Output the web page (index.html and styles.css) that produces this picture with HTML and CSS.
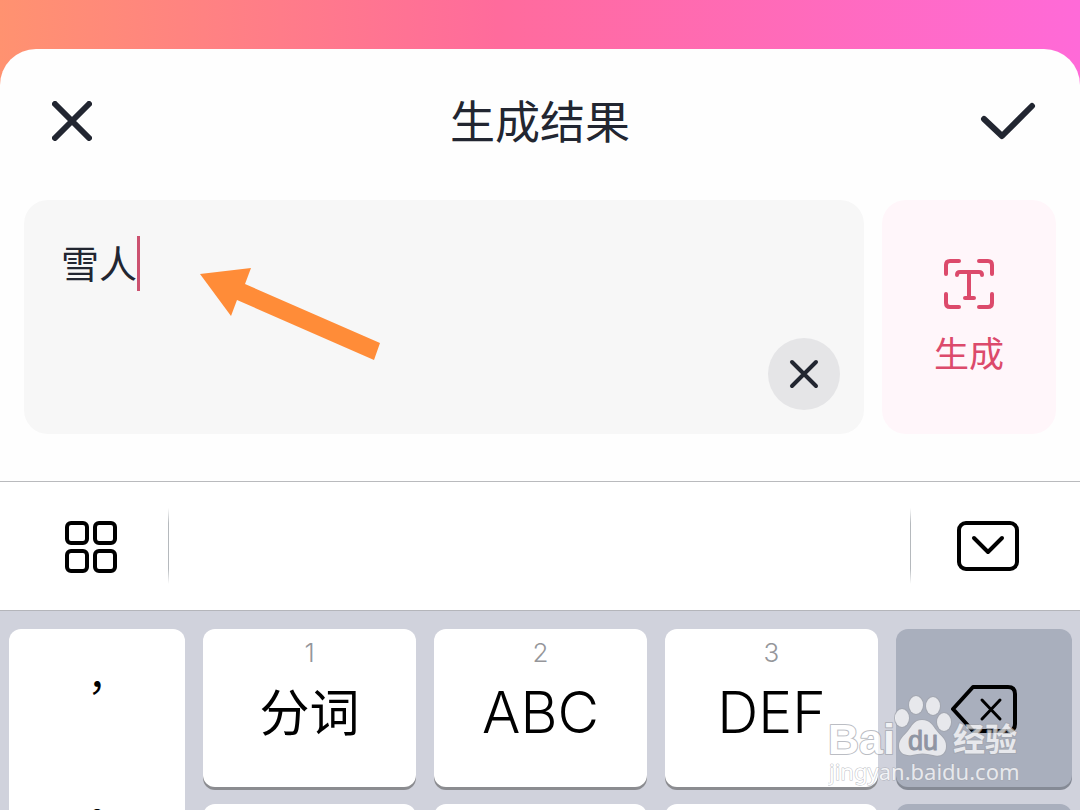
FILE: index.html
```
<!DOCTYPE html>
<html lang="zh-CN">
<head>
    <meta charset="UTF-8">
    <meta name="viewport" content="width=device-width, initial-scale=1.0">
    <title>生成结果</title>
    <link rel="stylesheet" href="styles.css">
</head>
<body>
    <main class="sheet">
        <header class="sheet-header">
            <button class="icon-btn" type="button" aria-label="关闭">
                <svg width="40" height="40" viewBox="0 0 40 40"><path d="M3 3 37 37M37 3 3 37" stroke-width="6"/></svg>
            </button>
            <h1>生成结果</h1>
            <button class="icon-btn" type="button" aria-label="完成">
                <svg width="56" height="38" viewBox="0 0 56 38"><path d="M4 17 22 34 52 4" stroke-width="6"/></svg>
            </button>
        </header>

        <div class="compose">
            <div class="input-box">
                <textarea class="prompt" aria-label="输入文字">雪人</textarea>
                <span class="caret"></span>
                <svg class="arrow" width="182" height="94" viewBox="0 0 182 94"><path d="M0 7 51 1 45 17 180 76 174 93 37 33 31 49Z"/></svg>
                <button class="clear-btn" type="button" aria-label="清空">
                    <svg width="30" height="30" viewBox="0 0 30 30"><path d="M3 3 27 27M27 3 3 27" stroke-width="4"/></svg>
                </button>
            </div>
            <button class="generate-btn" type="button">
                <svg width="52" height="52" viewBox="0 0 52 52">
                    <path d="M3 16V7q0-4 4-4h9M36 3h9q4 0 4 4v9M49 36v9q0 4-4 4h-9M16 49H7q-4 0-4-4v-9" stroke-width="4"/>
                    <path d="M14 17q0-3 3-3h19q3 0 3 3M26 14v26M22 40h9" stroke-width="4"/>
                </svg>
                <span>生成</span>
            </button>
        </div>
    </main>

    <div class="toolbar">
        <button class="tool tool-left" type="button" aria-label="功能">
            <svg width="52" height="52" viewBox="0 0 52 52">
                <rect x="2" y="2" width="20" height="20" rx="4"/>
                <rect x="30" y="2" width="20" height="20" rx="4"/>
                <rect x="2" y="30" width="20" height="20" rx="4"/>
                <rect x="30" y="30" width="20" height="20" rx="4"/>
            </svg>
        </button>
        <button class="tool tool-right" type="button" aria-label="收起键盘">
            <svg width="62" height="50" viewBox="0 0 62 50">
                <rect x="2" y="2" width="58" height="46" rx="7"/>
                <path d="M17 17 31 31 45 17"/>
            </svg>
        </button>
    </div>

    <div class="keyboard">
        <div class="punct" lang="zh-TW">
            <button type="button">，</button>
            <button type="button">。</button>
        </div>
        <button class="key key-cn" type="button"><small>1</small>分词</button>
        <button class="key" type="button"><small>2</small>ABC</button>
        <button class="key" type="button"><small>3</small>DEF</button>
        <button class="key key-dark" type="button" aria-label="删除">
            <svg width="66" height="48" viewBox="0 0 66 48">
                <path d="M22 2h35q7 0 7 7v30q0 7-7 7H22L2 24Z" stroke-width="4"/>
                <path d="M31 15 49 34M49 15 31 34" stroke-width="3"/>
            </svg>
        </button>
        <button class="key" type="button" aria-label="GHI"></button>
        <button class="key" type="button" aria-label="JKL"></button>
        <button class="key" type="button" aria-label="MNO"></button>
        <button class="key key-dark" type="button" aria-label="重输"></button>
    </div>

    <svg class="watermark" width="200" height="100" viewBox="0 0 200 100">
        <g class="mark">
            <text class="mark-bai" x="0" y="63">Bai</text>
            <ellipse cx="74" cy="27" rx="7" ry="9"/>
            <ellipse cx="88" cy="14" rx="7" ry="9"/>
            <ellipse cx="105" cy="15" rx="7" ry="9"/>
            <ellipse cx="116" cy="31" rx="7" ry="9"/>
            <path d="M94 29c8 0 11 6 14 10 4 6 10 8 10 16 0 9-7 11-13 9-7-2-14-2-21 0-7 1-13-2-13-9s5-10 9-15 6-11 14-11Z"/>
            <text class="mark-cn" x="125" y="60">经验</text>
            <text class="mark-url" x="1" y="89">jingyan.baidu.com</text>
        </g>
        <text class="mark-du" x="80" y="59">du</text>
    </svg>
</body>
</html>
```

FILE: styles.css
```
* {
    box-sizing: border-box;
}
body {
    margin: 0;
    height: 100vh;
    padding-top: 49px;
    display: flex;
    flex-direction: column;
    position: relative;
    overflow: hidden;
    background: linear-gradient(90deg, #ff9270 0%, #ff6b9c 46%, #ff6ad8 100%);
    font-family: Inter, "Noto Sans CJK SC", sans-serif;
    color: #222631;
}
button {
    border: 0;
    padding: 0;
    background: none;
    font: inherit;
    color: inherit;
}
svg {
    display: block;
    fill: none;
    stroke: currentColor;
    stroke-linecap: round;
    stroke-linejoin: round;
}

/* result sheet */
.sheet {
    background: #fefefe;
    border-radius: 36px 36px 0 0;
    padding: 0 24px 47px;
}
.sheet-header {
    height: 151px;
    padding: 0 20px 8px 28px;
    display: grid;
    grid-template-columns: 48px 1fr 56px;
    align-items: center;
}
.sheet-header h1 {
    margin: 0;
    padding-top: 4px;
    font-size: 45px;
    line-height: 60px;
    font-weight: 400;
    text-align: center;
}
.compose {
    display: flex;
    gap: 18px;
}
.input-box {
    flex: 1;
    height: 234px;
    position: relative;
    background: #f7f7f7;
    border-radius: 24px;
}
.prompt {
    display: block;
    width: 100%;
    height: 100%;
    padding: 36px 120px 36px 37px;
    border: 0;
    outline: 0;
    resize: none;
    background: none;
    font: 400 38px/56px Inter, "Noto Sans CJK SC", sans-serif;
    color: inherit;
}
.caret {
    position: absolute;
    left: 113px;
    top: 36px;
    width: 3px;
    height: 55px;
    background: #cc5270;
}
.arrow {
    position: absolute;
    left: 176px;
    top: 67px;
    fill: #ff8c38;
    stroke: none;
}
.clear-btn {
    position: absolute;
    right: 24px;
    bottom: 24px;
    width: 72px;
    height: 72px;
    display: grid;
    place-items: center;
    border-radius: 50%;
    background: #e5e5e7;
}
.generate-btn {
    width: 174px;
    padding-top: 4px;
    display: flex;
    flex-direction: column;
    align-items: center;
    justify-content: center;
    gap: 18px;
    border-radius: 24px;
    background: #fff6fa;
    color: #dc4a6b;
    font-size: 35px;
    line-height: 52px;
}

/* keyboard toolbar */
.toolbar {
    height: 130px;
    flex: none;
    display: flex;
    justify-content: space-between;
    align-items: center;
    background: #fff;
    border-top: 1px solid #b9babd;
    border-bottom: 1px solid #b4b5ba;
    color: #000;
}
.tool {
    width: 169px;
    height: 76px;
    display: grid;
    place-items: center;
    stroke-width: 4px;
    background: linear-gradient(transparent, #b5b9bd 20%, #b5b9bd 80%, transparent) no-repeat;
    background-size: 1px 100%;
}
.tool-left {
    padding: 2px 0 0 12px;
    background-position: right;
}
.tool-right {
    width: 170px;
    padding-right: 14px;
    background-position: left;
}

/* nine-key pad */
.keyboard {
    flex: 1;
    min-height: 0;
    overflow: hidden;
    display: grid;
    grid-template-columns: 176px repeat(3, 1fr) 176px;
    grid-auto-rows: 158px;
    gap: 17px 18px;
    padding: 18px 8px 0 9px;
    background: #d0d2dc;
    color: #000;
}
.punct {
    grid-row: span 2;
    display: flex;
    flex-direction: column;
    gap: 16px;
    background: #fff;
    border-radius: 12px;
    font-family: "Noto Sans CJK TC", sans-serif;
    font-size: 40px;
}
.punct button {
    height: 112px;
}
.key {
    display: flex;
    flex-direction: column;
    align-items: center;
    background: #fff;
    border-radius: 12px;
    box-shadow: 0 3px 0 #8b8c90;
    font-size: 57px;
    line-height: 88px;
    font-weight: 300;
}
.key small {
    margin-top: 8px;
    font-size: 26px;
    line-height: 32px;
    color: #95969a;
}
.key-cn {
    font-size: 50px;
    font-weight: 400;
}
.key-cn small {
    font-weight: 300;
}
.key-dark {
    justify-content: center;
    padding-top: 2px;
    background: #a9afbd;
    box-shadow: 0 3px 0 #858a95;
}

/* watermark over the keys */
.watermark {
    position: absolute;
    right: 52px;
    bottom: 19px;
    pointer-events: none;
    stroke: none;
}
.mark {
    fill: #fff;
    stroke: #a2a5ad;
    stroke-width: 2px;
    paint-order: stroke;
    opacity: 0.72;
}
.mark-bai {
    font: 700 43px "Liberation Sans", sans-serif;
}
.mark-cn {
    font: 700 32px "Noto Sans CJK SC", sans-serif;
}
.mark-url {
    font: 400 22px "Noto Sans", sans-serif;
    stroke-width: 1px;
}
.mark-du {
    font: 400 27px "Liberation Sans", sans-serif;
    fill: #8f95a2;
    stroke: #8f95a2;
    stroke-width: 1px;
}
```
